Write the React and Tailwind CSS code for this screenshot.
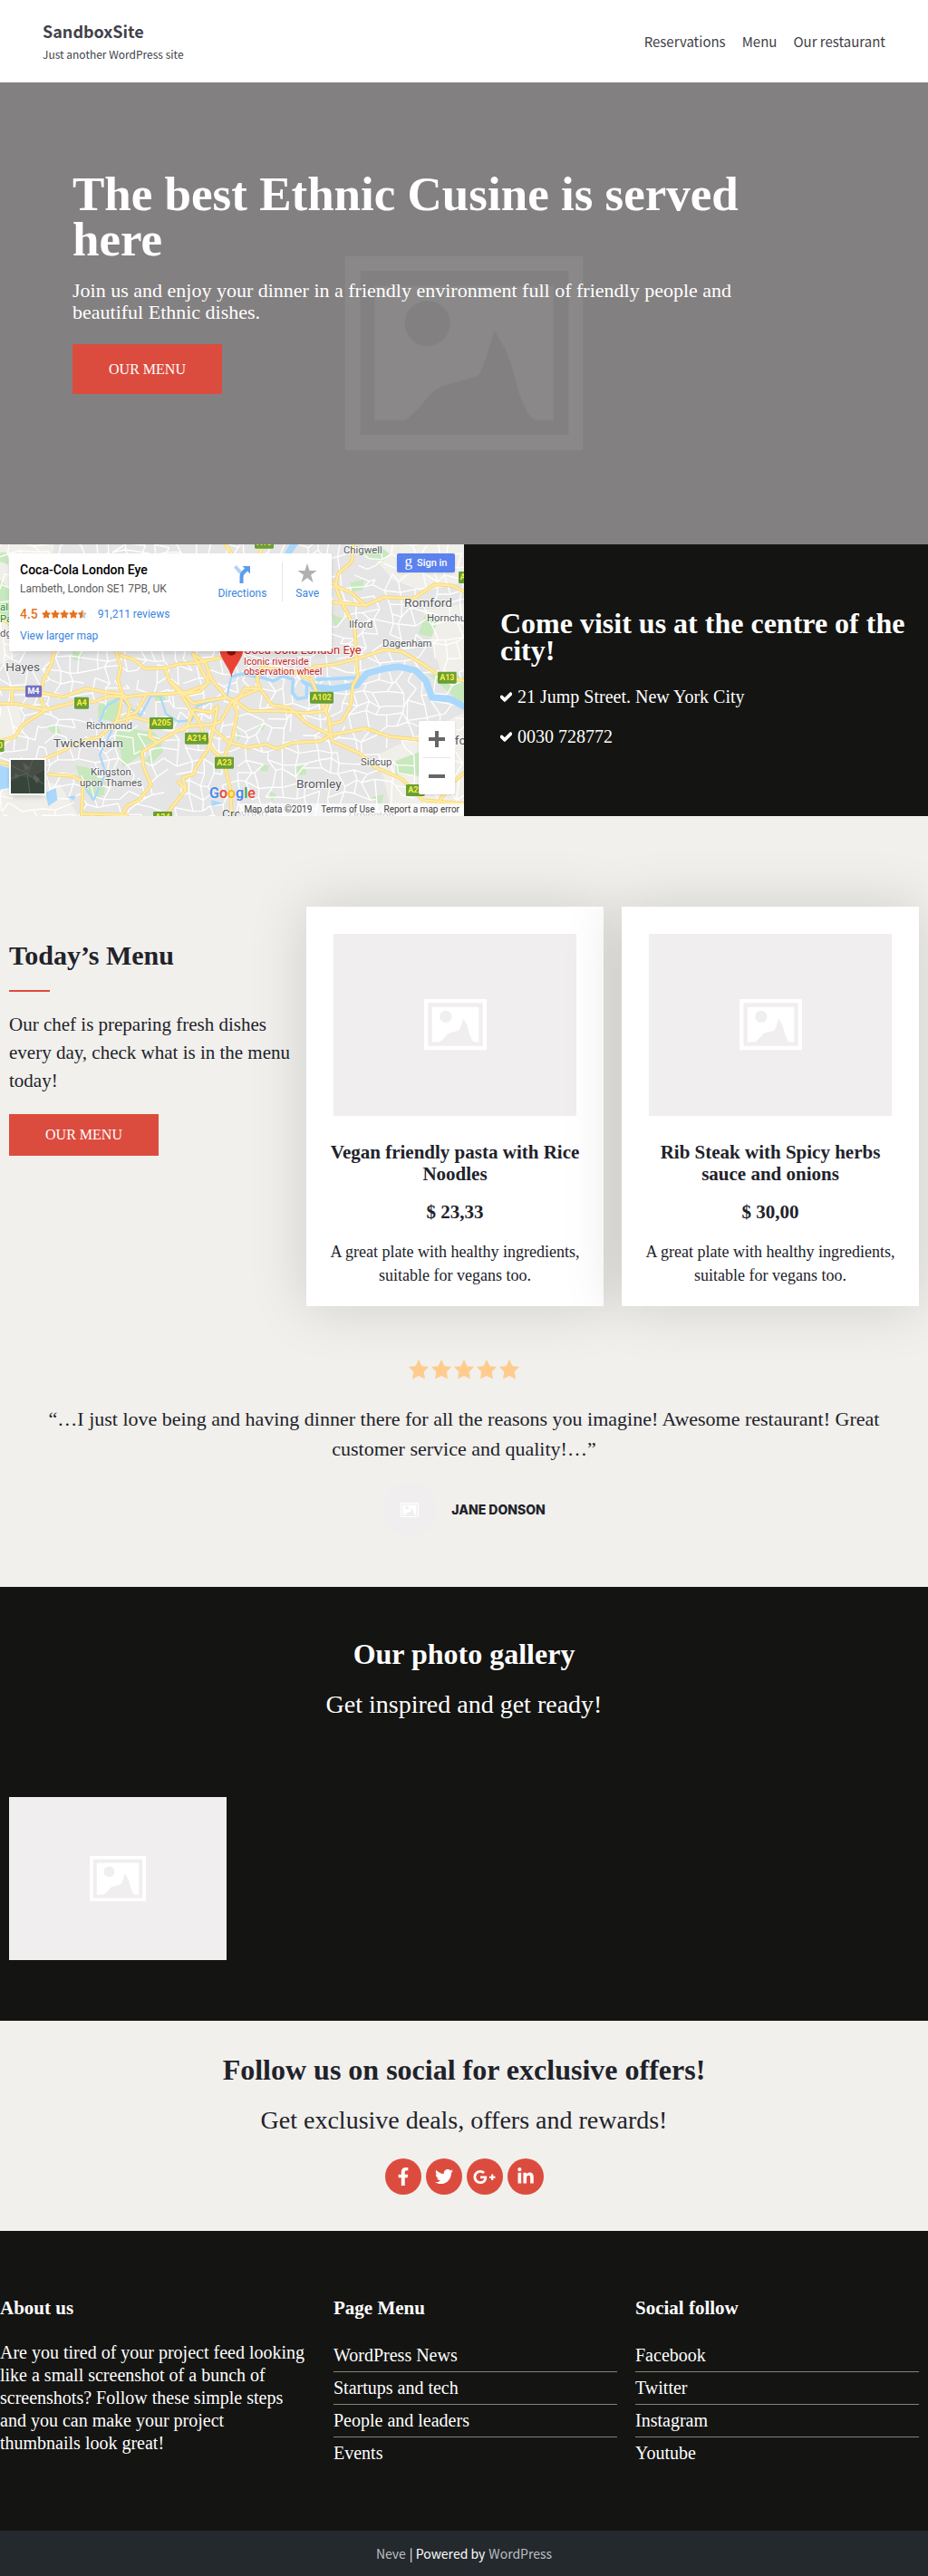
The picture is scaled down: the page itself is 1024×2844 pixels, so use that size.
import React from "react";
import { FaCheck, FaFacebookF, FaGooglePlusG, FaLinkedinIn, FaStar, FaTwitter } from "react-icons/fa";

const SANS = "font-['Noto_Sans_CJK_SC','Noto_Sans_CJK_JP',sans-serif]";
const SERIF = "font-['Source_Serif_Pro','Liberation_Serif',serif]";

/* Picture-frame glyph used wherever an image is missing */
function PlaceholderGlyph({ className }) {
  return (
    <svg viewBox="0 0 263 214" className={className} fill="currentColor" aria-hidden="true">
      <path fillRule="evenodd" d="M0 0h263v214H0zM17 16v181h230V16z" />
      <path
        fillRule="evenodd"
        d="M33 33H230V148V181H214C205 181 201 172 197 163C191 150 187 130 183 118C178 102 172 94 165 82C160 98 155 118 148 131C134 138 110 140 99 148C88 158 80 172 66 181H33zM91 49a25 25 0 1 0 0 50a25 25 0 1 0 0-50z"
      />
    </svg>
  );
}

function Header() {
  return (
    <header className={`flex items-center justify-between bg-white px-[47px] h-[91px] text-[#404248] ${SANS}`}>
      <div>
        <a href="#home" className="block text-[18px] leading-7 font-bold">SandboxSite</a>
        <p className="text-[12px] leading-6">Just another WordPress site</p>
      </div>
      <nav className="flex gap-[18px] text-[15px] leading-6">
        <a href="#reservations">Reservations</a>
        <a href="#menu">Menu</a>
        <a href="#restaurant">Our restaurant</a>
      </nav>
    </header>
  );
}

function Hero() {
  return (
    <section className="relative min-h-[510px] bg-[#838081] px-20 pt-[98px] text-white">
      <PlaceholderGlyph className="absolute left-1/2 top-48 w-[263px] -translate-x-1/2 text-[#8a8888]" />
      <div className="relative max-w-[800px]">
        <h1 className="text-[53px] leading-[50px] font-bold">The best Ethnic Cusine is served here</h1>
        <p className="mt-5 text-[22px] leading-6">
          Join us and enjoy your dinner in a friendly environment full of friendly people and beautiful Ethnic dishes.
        </p>
        <a href="#menu" className="mt-[23px] flex h-[55px] w-[165px] items-center justify-center bg-[#dc4c3e] text-[16px]">
          OUR MENU
        </a>
      </div>
    </section>
  );
}

/* ---------- Map ---------- */

const MAIN_ROADS = [
  "M0 480 L90 482 L140 495 L210 508 L285 480 L345 492 L400 498 L420 508 L480 500 L560 498 L620 492 L680 470",
  "M0 530 L60 532 L150 552 L250 525 L310 525 L360 505 L420 508",
  "M0 655 L50 640 L75 600 L150 552 L130 500 L145 450 L170 400 L180 350",
  "M40 482 V530",
  "M120 725 L200 690 L260 660 L330 640 L385 590 L440 575 L500 590 L560 590",
  "M385 360 L400 410 L390 450 L405 500 L395 560 L385 590",
  "M405 500 L430 540 L420 590 M485 500 L450 560 L420 570",
  "M400 370 L445 385 L480 415 L545 412 L590 400 L650 395 L730 378",
  "M545 412 L560 455 L600 500 L630 550 L660 590 L680 650 L710 690 L740 720 L760 800 L768 900",
  "M640 365 L680 395 L700 450 L750 510 L790 530 L825 555 L930 555 L1010 562 L1080 555 L1085 520",
  "M750 510 L690 520 L640 530 L610 500 L570 460",
  "M600 500 L660 490 L690 460 L640 370",
  "M500 590 L495 640 L520 660 L470 690 L475 740 L500 800 L460 850 L420 870 L400 905",
  "M520 660 L580 625 L620 605 L700 600 L730 590 L770 520 L860 480 L850 450 L870 400",
  "M620 605 L640 550 L700 560 L720 540 L710 600 L690 680 L650 740 L640 765 L605 775 L615 815 L580 860 L545 905",
  "M700 610 L760 660 L820 675 L880 665 L915 680 L970 660 L1060 655 L1095 635",
  "M770 520 L785 560 L770 640 L745 700 L755 740",
  "M860 480 L900 535 L960 545 L1020 600 L1095 635 L1210 612 L1290 640 L1390 650",
  "M1000 440 L1030 450 L1060 520 L1090 580 L1095 635 L1100 655 L1190 695 L1240 740 L1330 780 L1400 850 L1536 862",
  "M1085 600 L1130 590 L1160 540 L1168 470 L1185 440 L1180 400 L1175 290 L1155 240 L1130 195 L1110 140",
  "M870 410 L1000 430 L1040 408 L1110 400 L1190 380 L1270 352 L1330 358 L1400 400 L1460 440 L1536 455",
  "M1098 195 L1210 205 L1270 178 L1370 182 L1440 135 L1500 140 L1536 160",
  "M1170 0 L1165 60 L1120 100 L1110 140 L1165 165 L1210 205",
  "M745 0 L770 40 M840 60 L880 0 M1100 130 L1130 150",
  "M160 765 L240 770 L275 790 L270 900 M270 895 L420 900",
  "M0 245 L40 270 M0 725 L40 735 M1450 860 L1490 800 L1536 760",
  "M615 815 L590 790 M625 605 L600 620 M850 480 L810 480 L780 530",
];

const PARKS = [
  "M0 120 L30 150 L60 250 L30 275 L0 230z",
  "M390 620 L420 612 L510 625 L530 650 L480 670 L470 700 L405 740 L400 690 L380 655z",
  "M250 735 L300 745 L350 790 L345 830 L315 850 L280 820z",
  "M325 535 L390 510 L395 550 L380 590 L325 580z",
  "M510 500 L540 490 L550 525 L515 525z",
  "M1195 30 L1260 10 L1290 35 L1265 60 L1230 50z",
  "M1160 130 L1205 120 L1200 155 L1165 160z",
  "M1410 230 L1450 250 L1430 310 L1385 300z",
  "M1420 435 L1536 440 V545 L1495 500z",
  "M1310 720 L1390 690 V770 L1310 765z",
  "M975 740 L1010 735 L1015 765 L985 768z",
  "M860 735 L890 735 L885 755 L865 755z",
  "M240 355 L275 365 L265 390 L240 385z",
  "M1098 235 L1140 250 L1110 275z",
  "M785 620 L800 640 L785 655z",
  "M890 820 L915 830 L900 855z",
  "M0 30 H28 V70 L0 60z",
  "M150 600 L190 605 L205 635 L170 625z",
  "M850 600 L880 590 L870 620z",
  "M480 720 L530 650 L540 690 L500 730z",
  "M1230 840 L1270 830 L1260 870z",
];

const MAP_LABELS = [
  [1137, 34, 34, "Chigwell"], [1338, 210, 41, "Romford"], [1413, 259, 34, "Hornchurch"],
  [1155, 279, 34, "Ilford"], [1266, 342, 34, "Dagenham"], [19, 423, 41, "Hayes"],
  [285, 616, 34, "Richmond"], [177, 675, 41, "Twickenham"], [300, 768, 34, "Kingston"],
  [264, 804, 34, "upon Thames"], [981, 810, 41, "Bromley"], [1194, 735, 34, "Sidcup"],
  [1505, 667, 41, "ford"], [735, 910, 41, "Croydon"], [1155, 912, 34, "Orpington"], [0, 308, 34, "dg"],
];

const ROAD_BADGES = [
  [84, 54, 470, "M4", "#7170c4"], [246, 48, 509, "A4", "#689f38"], [495, 78, 576, "A205", "#689f38"],
  [612, 78, 626, "A214", "#689f38"], [711, 63, 707, "A23", "#689f38"], [1026, 78, 491, "A102", "#689f38"],
  [1449, 62, 425, "A13", "#689f38"], [1344, 62, 798, "A21", "#689f38"], [1518, 60, 93, "A12", "#689f38"],
  [843, 63, -22, "A10", "#689f38"], [507, 63, 888, "A24", "#689f38"], [-46, 60, 651, "A30", "#689f38"],
];

/* Deterministic jittered lattice that reads as minor streets */
function streetPath() {
  let seed = 7;
  const rand = () => {
    seed = (seed * 16807) % 2147483647;
    return seed / 2147483647;
  };
  const cols = 40;
  const rows = 25;
  const pts = [];
  for (let r = 0; r <= rows; r += 1) {
    const row = [];
    for (let c = 0; c <= cols; c += 1) {
      row.push([Math.round(c * 39 + (rand() - 0.5) * 34), Math.round(r * 38 + (rand() - 0.5) * 34)]);
    }
    pts.push(row);
  }
  let d = "";
  for (let r = 0; r < rows; r += 1) {
    for (let c = 0; c < cols; c += 1) {
      const [x, y] = pts[r][c];
      if (rand() < 0.68) d += `M${x} ${y}L${pts[r][c + 1].join(" ")}`;
      if (rand() < 0.68) d += `M${x} ${y}L${pts[r + 1][c].join(" ")}`;
    }
  }
  return d;
}
const STREETS = streetPath();

function MapDrawing() {
  return (
    <svg
      viewBox="0 3 1536 900"
      preserveAspectRatio="xMidYMid slice"
      className="absolute inset-0 h-full w-full font-[Roboto,sans-serif]"
      role="img"
      aria-label="Map of London"
    >
      <rect y="0" width="1536" height="910" fill="#e5e5e5" />
      <g fill="#f1efe9">
        <path d="M0 0H180L120 340L0 400zM0 540L60 530L80 620L0 680zM1200 0H1536V130L1400 160L1300 120zM1400 220L1536 200V420L1460 430zM1250 700L1536 560V903H1300zM0 760L200 800L260 903H0z" />
      </g>
      <g fill="#c8e8bd">{PARKS.map((d) => <path key={d} d={d} />)}</g>
      <path d={STREETS} stroke="#fff" strokeWidth="4" fill="none" />
      <g fill="none" stroke="#a9d8fc" strokeLinejoin="round" strokeLinecap="round">
        <path strokeWidth="22" d="M1040 475 L1100 482 L1180 470 L1215 430 L1270 415 L1320 408 L1375 420 L1410 455 L1430 510 L1490 515 L1545 545" />
        <path strokeWidth="11" d="M770 440 L800 432 L870 445 L905 455 L935 440 L970 450 L968 495 L985 515 L1015 510 L1015 470 L1000 455 L1040 475" />
        <path strokeWidth="7" d="M765 445 L750 510 L690 525 L650 540 L635 585 L590 590 L550 565 L530 505 L500 505 L465 570 L430 545 L400 510 L350 540 L330 590 L370 620 L350 660 L330 700 L350 760 L310 850 L275 800" />
        <path strokeWidth="22" d="M955 30 L975 0" />
        <path strokeWidth="12" d="M1050 450 L1180 445" />
      </g>
      <path fill="#a9d8fc" d="M0 735L30 745V810L0 815zM150 825L185 810L190 850L160 870zM220 840L250 835L245 850zM700 850L740 860L700 870z" />
      <g fill="none" strokeLinejoin="round" strokeLinecap="round">
        {MAIN_ROADS.map((d) => <path key={d} d={d} stroke="#f7d774" strokeWidth="12" />)}
        {MAIN_ROADS.map((d) => <path key={`${d}i`} d={d} stroke="#ffeba5" strokeWidth="7" />)}
      </g>
      {ROAD_BADGES.map(([x, w, y, label, fill]) => (
        <g key={label}>
          <rect x={x} y={y} width={w} height="39" rx="4" fill={fill} />
          <text x={x + w / 2} y={y + 28} textAnchor="middle" fontSize="27" fontWeight="700" fill={label === "M4" ? "#fff" : "#ffee3d"}>
            {label}
          </text>
        </g>
      ))}
      <g fill="#55585c" stroke="#fff" strokeWidth="5" paintOrder="stroke" strokeOpacity="0.8">
        {MAP_LABELS.map(([x, y, size, label]) => (
          <text key={label} x={x} y={y} fontSize={size}>{label}</text>
        ))}
        <text x="0" y="222" fontSize="34" fill="#19851f">alley</text>
        <text x="0" y="260" fontSize="34" fill="#19851f">Park</text>
      </g>
      <g fill="#c5221f" stroke="#fff" strokeWidth="5" paintOrder="stroke" strokeOpacity="0.8">
        <text x="807" y="367" fontSize="39">Coca-Cola London Eye</text>
        <text x="807" y="401" fontSize="32">Iconic riverside</text>
        <text x="807" y="434" fontSize="32">observation wheel</text>
      </g>
      <path d="M766 445C762 410 726 385 726 345a40 40 0 0 1 80 0C806 385 770 410 766 445z" fill="#ea4335" />
      <circle cx="766" cy="356" r="15" fill="#8c1009" />
    </svg>
  );
}

function RatingStars() {
  return (
    <span className="flex text-[10px] leading-none text-[#e7711b]" aria-label="4.5 out of 5">
      {[0, 1, 2, 3].map((i) => <FaStar key={i} />)}
      <span className="relative text-[#c6c6c6]">
        <FaStar />
        <span className="absolute inset-y-0 left-0 w-[5px] overflow-hidden text-[#e7711b]">
          <FaStar />
        </span>
      </span>
    </span>
  );
}

function MapPanel() {
  return (
    <div className="relative h-[300px] overflow-hidden font-[Roboto,sans-serif]">
      <MapDrawing />
      <div className="absolute left-[10px] top-[10px] flex h-[108px] w-[356px] justify-between rounded-[2px] bg-white pl-3 shadow-md">
        <div className="pt-[9px] text-[12px]">
          <h3 className="text-[14px] leading-[18px] font-medium text-black">Coca-Cola London Eye</h3>
          <p className="mt-1 leading-4 text-[#5b5b5b]">Lambeth, London SE1 7PB, UK</p>
          <div className="mt-3 flex items-center leading-4">
            <span className="mr-1 text-[14px] font-medium text-[#e7711b]">4.5</span>
            <RatingStars />
            <a href="#reviews" className="ml-3 text-[#3a84df]">91,211 reviews</a>
          </div>
          <a href="#larger-map" className="mt-2 block leading-4 text-[#3a84df]">View larger map</a>
        </div>
        <div className="flex text-[12px] text-[#3a84df]">
          <a href="#directions" className="flex flex-col items-center pt-3 pr-[17px]">
            <svg viewBox="0 0 22 22" className="h-[22px] w-[22px]" aria-hidden="true">
              <path d="M2 3.500L5 1L11 8L8.500 11z" fill="#b5d2f7" />
              <path d="M8.500 21V13q0-3 2-5L14 4.500L11.500 2H20v8.500L17 7.500L14 10.500q-1.500 1.500-1.500 3.500v7z" fill="#5c9cec" />
            </svg>
            <span className="mt-[2px] leading-4">Directions</span>
          </a>
          <div className="mt-[10px] h-[43px] w-px bg-[#e5e5e5]" />
          <a href="#save" className="flex flex-col items-center px-[14px] pt-[11px]">
            <svg viewBox="0 0 22 22" className="h-[22px] w-[22px]" aria-hidden="true">
              <path d="M11 0l2.600 8H21.500l-6.400 4.700L17.500 21L11 16L4.500 21l2.400-8.300L.5 8h7.900z" fill="#b0b0b0" />
            </svg>
            <span className="mt-[3px] leading-4">Save</span>
          </a>
        </div>
      </div>
      <button type="button" className="absolute right-[10px] top-[10px] flex h-[21px] w-16 items-center justify-center gap-[5px] rounded-[2px] bg-[#5b82ee] text-[11px] leading-4 font-medium text-white shadow">
        <span className="pb-1 font-['Liberation_Serif',serif] text-[17px] leading-4">g</span>
        Sign in
      </button>
      <div className="absolute bottom-[24px] right-[10px] flex h-[81px] w-10 flex-col items-center rounded-[2px] bg-white shadow">
        <button type="button" aria-label="Zoom in" className="flex w-full flex-1 items-center justify-center">
          <svg viewBox="0 0 18 18" className="h-[18px] w-[18px]"><path d="M7 0h4v7h7v4h-7v7H7v-7H0V7h7z" fill="#666" /></svg>
        </button>
        <div className="h-px w-[30px] bg-[#e6e6e6]" />
        <button type="button" aria-label="Zoom out" className="flex w-full flex-1 items-center justify-center">
          <svg viewBox="0 0 18 18" className="h-[18px] w-[18px]"><path d="M0 7h18v4H0z" fill="#666" /></svg>
        </button>
      </div>
      <button type="button" aria-label="Satellite view" className="absolute bottom-[23px] left-[10px] h-[41px] w-[41px] overflow-hidden border-2 border-white bg-[#454d45] shadow-md">
        <svg viewBox="0 0 37 37" className="h-full w-full" aria-hidden="true">
          <path d="M0 24L12 18L20 20L37 12V37H0z" fill="#35453a" />
          <path d="M4 14l5 3-4 4zM26 16l6 5-3 5-5-6zM13 3l8 5-5 5z" fill="#5d5c58" />
          <path d="M0 20L17 15L37 27M18 15L21 37M19 15L24 0M0 6L18 15" stroke="#5e6059" strokeWidth="1" fill="none" />
        </svg>
      </button>
      <div className="absolute bottom-[15px] left-[231px] flex text-[16px] leading-5 font-medium" aria-label="Google">
        <span className="text-[#4285f4]">G</span>
        <span className="text-[#ea4335]">o</span>
        <span className="text-[#fbbc05]">o</span>
        <span className="text-[#4285f4]">g</span>
        <span className="text-[#34a853]">l</span>
        <span className="text-[#ea4335]">e</span>
      </div>
      <div className="absolute bottom-0 right-0 flex h-[14px] items-center gap-[10px] bg-white/70 px-[5px] text-[10px] leading-none text-[#444]">
        <span>Map data ©2019</span>
        <a href="#terms">Terms of Use</a>
        <a href="#report">Report a map error</a>
      </div>
    </div>
  );
}

function Visit() {
  return (
    <section className="grid grid-cols-2 bg-[#141412] text-white">
      <MapPanel />
      <div className="pl-10 pr-5 pt-[72px]">
        <h2 className="text-[32px] leading-[30px] font-bold">Come visit us at the centre of the city!</h2>
        <ul className="mt-6 space-y-5 text-[20px] leading-6">
          {["21 Jump Street. New York City", "0030 728772"].map((line) => (
            <li key={line} className="flex items-center gap-[6px]">
              <FaCheck className="h-[13px] w-[13px] stroke-white stroke-[40]" />
              {line}
            </li>
          ))}
        </ul>
      </div>
    </section>
  );
}

function DishCard({ title, price }) {
  return (
    <article className="bg-white px-[22px] pb-[21px] pt-[30px] text-center shadow-[0_0_60px_rgba(0,0,0,0.15)]">
      <div className="mx-2 flex h-[201px] items-center justify-center bg-[#f0eeef]">
        <PlaceholderGlyph className="w-[69px] text-white" />
      </div>
      <h3 className="mt-7 text-[21px] leading-6 font-bold">{title}</h3>
      <p className="mt-[18px] text-[21px] leading-6 font-bold">{price}</p>
      <p className="mt-[19px] text-[18px] leading-[26px]">A great plate with healthy ingredients, suitable for vegans too.</p>
    </article>
  );
}

function MenuSection() {
  return (
    <section className="bg-[#f1f0ec] px-[10px] pb-[55px] pt-[100px] text-[#21222a]">
      <div className="grid grid-cols-[318fr_676fr] gap-[10px]">
        <div className="pt-[38px]">
          <h2 className="text-[30px] leading-8 font-bold">Today’s Menu</h2>
          <div className="mt-[22px] h-[2px] w-[45px] bg-[#dc4c3e]" />
          <p className="mt-[21px] text-[21px] leading-[31px]">Our chef is preparing fresh dishes every day, check what is in the menu today!</p>
          <a href="#menu" className="mt-[21px] flex h-[46px] w-[165px] items-center justify-center bg-[#dc4c3e] text-[16px] text-white">
            OUR MENU
          </a>
        </div>
        <div className="grid grid-cols-2 gap-5">
          <DishCard title="Vegan friendly pasta with Rice Noodles" price="$ 23,33" />
          <DishCard title="Rib Steak with Spicy herbs sauce and onions" price="$ 30,00" />
        </div>
      </div>
      <div className="mt-[59px] text-center">
        <div className="flex justify-center gap-px" aria-label="5 out of 5">
          {[0, 1, 2, 3, 4].map((i) => (
            <svg key={i} viewBox="0 0 24 22" className="h-[22px] w-6 text-[#ffcc8e]" fill="currentColor" aria-hidden="true">
              <path d="M12 0L15.500 7.200L23 8L17.700 13.500L19 21.500L12 18L5 21.500L6.300 13.500L1 8L8.500 7.200z" />
            </svg>
          ))}
        </div>
        <blockquote className="mt-[27px] px-5 text-[22px] leading-[33px]">
          “…I just love being and having dinner there for all the reasons you imagine! Awesome restaurant! Great customer service and quality!…”
        </blockquote>
        <div className="mt-[21px] flex items-center justify-center gap-4">
          <div className="flex h-[60px] w-[60px] items-center justify-center rounded-full bg-[#f0eeef]">
            <PlaceholderGlyph className="w-5 text-white" />
          </div>
          <p className="font-[Inter,sans-serif] text-[14px] leading-5 font-extrabold">JANE DONSON</p>
        </div>
      </div>
    </section>
  );
}

function SectionHeading({ title, text }) {
  return (
    <div className="text-center">
      <h2 className="text-[32px] leading-9 font-bold">{title}</h2>
      <p className="mt-[22px] text-[28px] leading-8">{text}</p>
    </div>
  );
}

function Gallery() {
  return (
    <section className="bg-[#141412] px-[10px] pb-[67px] pt-14 text-white">
      <SectionHeading title="Our photo gallery" text="Get inspired and get ready!" />
      <div className="mt-[86px] flex h-[180px] w-60 items-center justify-center bg-[#f0eeef]">
        <PlaceholderGlyph className="w-[62px] text-white" />
      </div>
    </section>
  );
}

const SOCIALS = [
  ["Facebook", FaFacebookF, "h-5 w-5"],
  ["Twitter", FaTwitter, "h-5 w-5"],
  ["Google Plus", FaGooglePlusG, "h-[25px] w-[25px]"],
  ["LinkedIn", FaLinkedinIn, "h-5 w-5"],
];

function Follow() {
  return (
    <section className="bg-[#f1f0ec] px-[10px] pb-10 pt-9 text-[#21222a]">
      <SectionHeading title="Follow us on social for exclusive offers!" text="Get exclusive deals, offers and rewards!" />
      <div className="mt-[26px] flex justify-center gap-[5px]">
        {SOCIALS.map(([name, Icon, size]) => (
          <a key={name} href={`#${name}`} aria-label={name} className="flex h-10 w-10 items-center justify-center rounded-full bg-[#dc4c3e] text-white">
            <Icon className={size} />
          </a>
        ))}
      </div>
    </section>
  );
}

function LinkColumn({ title, links }) {
  return (
    <div>
      <h3 className="text-[21px] leading-6 font-bold">{title}</h3>
      <ul className="mt-[23px] divide-y divide-[#83827f]">
        {links.map((link) => (
          <li key={link} className="leading-[35px]"><a href={`#${link}`}>{link}</a></li>
        ))}
      </ul>
    </div>
  );
}

function Footer() {
  return (
    <footer>
      <div className="grid grid-cols-[348fr_313fr_313fr] gap-5 bg-[#141412] pb-[68px] pr-[10px] pt-[73px] text-[20px] text-white">
        <div className="pr-[10px]">
          <h3 className="text-[21px] leading-6 font-bold">About us</h3>
          <p className="mt-[25px] leading-[25px]">
            Are you tired of your project feed looking like a small screenshot of a bunch of screenshots? Follow these simple steps and you can make your project thumbnails look great!
          </p>
        </div>
        <LinkColumn title="Page Menu" links={["WordPress News", "Startups and tech", "People and leaders", "Events"]} />
        <LinkColumn title="Social follow" links={["Facebook", "Twitter", "Instagram", "Youtube"]} />
      </div>
      <p className={`flex h-[50px] items-center justify-center gap-1 bg-[#24292e] text-[14px] leading-5 text-white ${SANS}`}>
        <a href="#neve" className="text-[#bdbfc0]">Neve</a>
        <span>| Powered by</span>
        <a href="#wordpress" className="text-[#bdbfc0]">WordPress</a>
      </p>
    </footer>
  );
}

export default function App() {
  return (
    <div className={SERIF}>
      <Header />
      <main>
        <Hero />
        <Visit />
        <MenuSection />
        <Gallery />
        <Follow />
      </main>
      <Footer />
    </div>
  );
}
